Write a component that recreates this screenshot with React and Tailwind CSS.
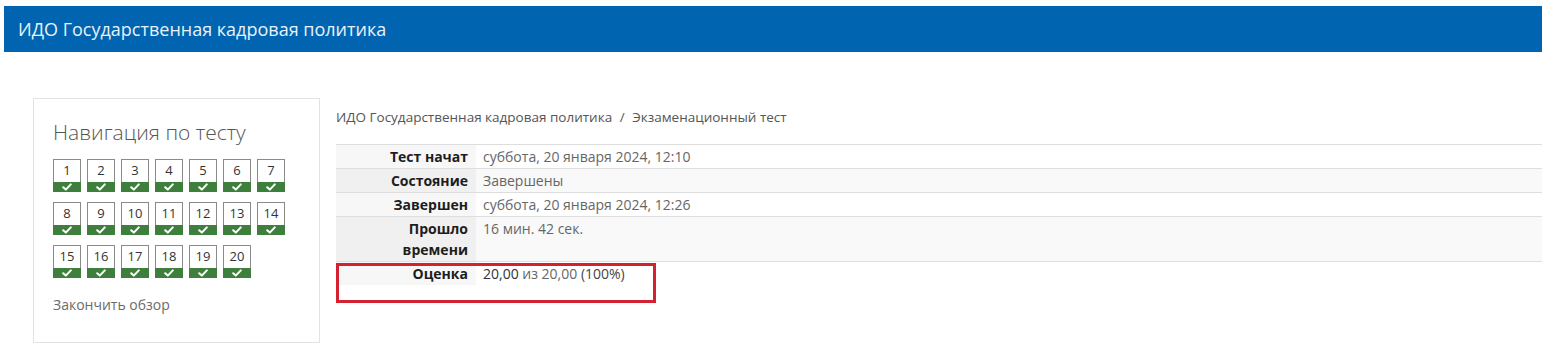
const ROWS = [
  { label: 'Тест начат', value: 'суббота, 20 января 2024, 12:10' },
  { label: 'Состояние', value: 'Завершены' },
  { label: 'Завершен', value: 'суббота, 20 января 2024, 12:26' },
  { label: ['Прошло', 'времени'], value: '16 мин. 42 сек.' },
];

function Check() {
  return (
    <svg width="10" height="8" viewBox="0 0 10 8" fill="none">
      <path d="M1.2 4.2 L3.8 6.6 L8.8 1.4" stroke="#fff" strokeWidth="2" strokeLinecap="round" strokeLinejoin="round" />
    </svg>
  );
}

function QButton({ n }) {
  return (
    <div className="w-[28px] flex flex-col">
      <div className="h-[23px] border border-[#8a8a8a] border-b-0 bg-white flex items-center justify-center text-[13px] text-[#333]">
        {n}
      </div>
      <div className="h-[10px] bg-[#3e7f3e] flex items-center justify-center">
        <Check />
      </div>
    </div>
  );
}

export default function App() {
  const nums = Array.from({ length: 20 }, (_, i) => i + 1);

  return (
    <div className="w-[1542px] h-[361px] bg-white overflow-hidden font-['Open_Sans',sans-serif]">
      <div className="pt-[6px] pl-[4px]">
        <div className="h-[46px] bg-[#0064b0] flex items-center pl-[14px] text-[18px] text-[#e8f2fb]">
          ИДО Государственная кадровая политика
        </div>
      </div>

      <div className="flex mt-[46px]">
        <div className="ml-[33px] w-[287px] h-[245px] border border-[#e3e3e3] pl-[19px] pt-[19px]">
          <div className="text-[21px] font-light text-[#555] leading-[28px]">Навигация по тесту</div>
          <div className="mt-[13px] grid grid-cols-[repeat(7,28px)] gap-x-[6px] gap-y-[10px]">
            {nums.map((n) => (
              <QButton key={n} n={n} />
            ))}
          </div>
          <div className="mt-[16px] text-[14px] text-[#6b6b6b]">Закончить обзор</div>
        </div>

        <div className="ml-[16px] flex-1 pt-[9px]">
          <div className="text-[13.5px] text-[#555] leading-[20px]">
            ИДО Государственная кадровая политика <span className="mx-[4px]">/</span> Экзаменационный тест
          </div>
          <div className="mt-[17px] text-[14px] leading-[21px]">
            {ROWS.map((r, i) => (
              <div
                key={i}
                className={`flex border-t border-[#dedede] ${i % 2 === 1 ? 'bg-[#f9f9f9]' : 'bg-white'}`}
              >
                <div
                  className={`w-[140px] shrink-0 text-right pr-[8px] py-[1px] font-bold text-[#1d1d1d] ${
                    i % 2 === 1 ? 'bg-[#f0f0f0]' : 'bg-[#f7f7f7]'
                  }`}
                >
                  {Array.isArray(r.label) ? r.label.map((l) => <div key={l}>{l}</div>) : r.label}
                </div>
                <div className="pl-[7px] py-[1px] text-[#666]">{r.value}</div>
              </div>
            ))}
            <div className="relative flex border-t border-[#dedede] bg-white h-[41px]">
              <div className="w-[140px] shrink-0 h-[23px] text-right pr-[8px] pt-[1px] font-bold text-[#1d1d1d] bg-[#f7f7f7]">
                Оценка
              </div>
              <div className="pl-[7px] pt-[1px] text-[#666]">
                <span className="text-[#333]">20,00</span> из 20,00 <span className="text-[#444]">(100%)</span>
              </div>
              <div className="absolute left-0 top-[1px] w-[320px] h-[40px] border-[3px] border-[#d3212f]" />
            </div>
          </div>
        </div>
      </div>
    </div>
  );
}
